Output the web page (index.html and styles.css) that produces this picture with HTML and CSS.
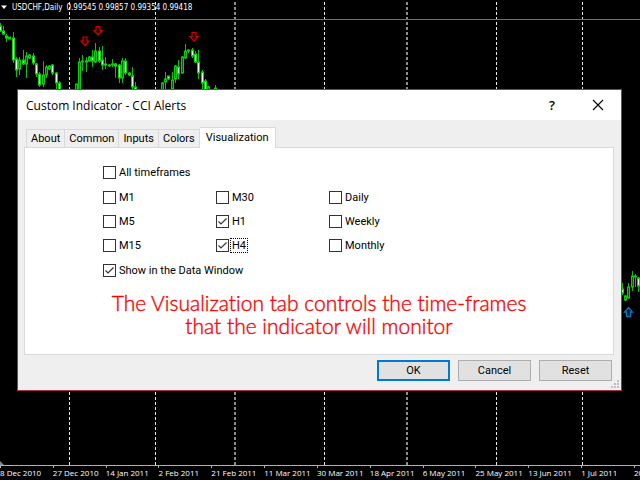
FILE: index.html
```
<!DOCTYPE html>
<html lang="en">
<head>
  <meta charset="UTF-8">
  <meta name="viewport" content="width=device-width, initial-scale=1.0">
  <title>USDCHF,Daily</title>
  <link rel="stylesheet" href="styles.css">
</head>
<body>
  <svg class="plot" aria-hidden="true">
    <g class="separators">
      <path d="M69.5 0V465M155.5 0V465M324.5 0V465M496.5 0V465M582.5 0V465"/>
      <path class="soft" d="M235 0V465M407 0V465"/>
    </g>
    <g id="candles"></g>
    <g class="sell">
      <path d="M83 37h4v4h2l-4 4.500l-4 -4.500h2z"/>
      <path d="M96 26.500h4v4h2l-4 4.500l-4 -4.500h2z"/>
      <path d="M192 32.500h4v4h2l-4 4.500l-4 -4.500h2z"/>
    </g>
    <path class="buy" d="M626.500 316.500h4v-4.500h2l-4 -4.500l-4 4.500h2z"/>
    <path class="marker" d="M0 461l4 4h-4z"/>
  </svg>

  <header class="quote">
    <svg width="8" height="5" aria-hidden="true"><path d="M1 0.500h6l-3 3.500z" fill="#fff"/></svg>
    <span>USDCHF,Daily</span>
    <span>0.99545 0.99857 0.99354 0.99418</span>
  </header>

  <main class="desktop">
    <form class="dialog" role="dialog" aria-labelledby="title">
      <div class="titlebar">
        <h1 id="title">Custom Indicator - CCI Alerts</h1>
        <button type="button" class="caption help" aria-label="Help">?</button>
        <button type="button" class="caption" aria-label="Close">
          <svg width="12" height="12" aria-hidden="true"><path d="M1 1l10 10M11 1l-10 10" stroke="#000" stroke-width="1.100"/></svg>
        </button>
      </div>

      <div class="tabs" role="tablist">
        <button type="button" class="tab" role="tab">About</button>
        <button type="button" class="tab" role="tab">Common</button>
        <button type="button" class="tab" role="tab">Inputs</button>
        <button type="button" class="tab" role="tab">Colors</button>
        <button type="button" class="tab active" role="tab" aria-selected="true">Visualization</button>
      </div>

      <div class="panel" role="tabpanel">
        <div class="options">
          <label class="check"><input type="checkbox"><span>All timeframes</span></label>
          <div class="frames">
            <label class="check"><input type="checkbox"><span>M1</span></label>
            <label class="check"><input type="checkbox"><span>M30</span></label>
            <label class="check"><input type="checkbox"><span>Daily</span></label>
            <label class="check"><input type="checkbox"><span>M5</span></label>
            <label class="check"><input type="checkbox" checked><span>H1</span></label>
            <label class="check"><input type="checkbox"><span>Weekly</span></label>
            <label class="check"><input type="checkbox"><span>M15</span></label>
            <label class="check current"><input type="checkbox" checked><span>H4</span></label>
            <label class="check"><input type="checkbox"><span>Monthly</span></label>
          </div>
          <label class="check"><input type="checkbox" checked><span>Show in the Data Window</span></label>
        </div>
        <p class="note">The Visualization tab controls the time-frames<br>that the indicator will monitor</p>
      </div>

      <div class="actions">
        <button type="submit" class="btn default">OK</button>
        <button type="button" class="btn">Cancel</button>
        <button type="reset" class="btn">Reset</button>
      </div>
      <svg class="grip" width="8" height="8" aria-hidden="true">
        <path d="M6 0h2v2h-2zM3 3h2v2h-2zM6 3h2v2h-2zM0 6h2v2h-2zM3 6h2v2h-2zM6 6h2v2h-2z" fill="#bfbfbf"/>
      </svg>
    </form>
  </main>

  <footer class="axis">
    <span>8 Dec 2010</span>
    <span>27 Dec 2010</span>
    <span>14 Jan 2011</span>
    <span>2 Feb 2011</span>
    <span>21 Feb 2011</span>
    <span>11 Mar 2011</span>
    <span>30 Mar 2011</span>
    <span>18 Apr 2011</span>
    <span>6 May 2011</span>
    <span>25 May 2011</span>
    <span>13 Jun 2011</span>
    <span>1 Jul 2011</span>
    <span>20 Jul 2011</span>
  </footer>

  <script src="chart.js"></script>
</body>
</html>
```
FILE: styles.css
```
* {
  margin: 0;
  padding: 0;
  box-sizing: border-box;
}

body {
  display: flex;
  flex-direction: column;
  min-height: 100vh;
  background: #000;
  color: #000;
  font-family: Roboto, "Liberation Sans", sans-serif;
  font-size: 11px;
}

button {
  font: inherit;
  color: inherit;
  border: 0;
  background: none;
}

/* chart */

.plot {
  position: absolute;
  top: 0;
  left: 0;
  width: 100%;
  height: 100%;
  z-index: -1;
}

.separators path {
  stroke: #e8e8e8;
  stroke-width: 1;
  stroke-dasharray: 3 2;
  stroke-dashoffset: 3;
}

.separators .soft {
  stroke: #8c8c8c;
  stroke-width: 2;
}

.wick {
  stroke: #00c800;
  stroke-width: 1;
}

.bull {
  fill: #006400;
  stroke: #00d200;
}

.bear {
  fill: #d8ffd8;
  stroke: #00e000;
}

.sell path {
  fill: #200000;
  stroke: #d00000;
  stroke-width: 1.2;
}

.buy {
  fill: #001828;
  stroke: #0078c0;
  stroke-width: 1.3;
}

.marker {
  fill: #778899;
}

.quote {
  display: flex;
  align-items: center;
  gap: 4px;
  height: 20px;
  padding: 0 0 4px;
  border-bottom: 1px solid #66727c;
  color: #fff;
  font-family: "DejaVu Sans Condensed", "DejaVu Sans", sans-serif;
  font-size: 8px;
  white-space: nowrap;
}

.desktop {
  flex: 1;
  padding: 69px 18px 0 17px;
}

.axis {
  display: grid;
  grid-template-columns: repeat(12, 1fr) 6px;
  height: 15px;
  border-top: 1px solid #b0b0b0;
  color: #fff;
  font-family: "Open Sans", sans-serif;
  font-size: 8px;
  line-height: 14px;
  white-space: nowrap;
}

.axis span {
  overflow: hidden;
  background: linear-gradient(#b0b0b0, #b0b0b0) 0 0 / 1px 2px no-repeat;
}

/* dialog */

.dialog {
  position: relative;
  border: 1px solid #a8324a;
  background: #efefef;
}

.titlebar {
  display: flex;
  align-items: center;
  height: 30px;
  padding: 0 0 0 8px;
  background: #fff;
}

.titlebar h1 {
  flex: 1;
  font-family: "Open Sans", sans-serif;
  font-size: 12px;
  font-weight: 400;
}

.caption {
  display: flex;
  align-items: center;
  justify-content: center;
  width: 46px;
  height: 30px;
}

.help {
  font-family: "Open Sans", sans-serif;
  font-size: 13px;
  font-weight: 600;
}

.tabs {
  display: flex;
  align-items: flex-end;
  padding: 7px 8px 0;
}

.tab {
  height: 18px;
  padding: 0 4px;
  border: 1px solid #d9d9d9;
  border-width: 1px 1px 0 0;
}

.tab:first-child {
  border-left-width: 1px;
}

.tab.active {
  height: 21px;
  margin-bottom: -1px;
  padding: 0 6px 2px;
  background: #fff;
  z-index: 1;
}

.panel {
  margin: 0 7px 0 6px;
  padding: 12px 0 17px;
  border: 1px solid #d9d9d9;
  background: #fff;
}

.options {
  display: grid;
  gap: 1px;
  padding-left: 78px;
}

.frames {
  display: grid;
  grid-template-columns: repeat(3, 113px);
}

.check {
  display: flex;
  align-items: center;
  gap: 2px;
  height: 24px;
}

.check input {
  appearance: none;
  width: 13px;
  height: 13px;
  border: 1px solid #333;
  background: #fff;
}

.check input:checked {
  background: url("data:image/svg+xml,%3Csvg xmlns='http://www.w3.org/2000/svg' width='11' height='11'%3E%3Cpath d='M1.500 5.500l2.500 2.500l5.500 -5.500' fill='none' stroke='%23333' stroke-width='1.200'/%3E%3C/svg%3E") no-repeat;
}

.check span {
  padding: 0 1px;
}

.current span {
  outline: 1px dotted #000;
}

.note {
  margin-top: 9px;
  color: #f00;
  font-family: Lato, sans-serif;
  font-size: 21px;
  font-weight: 300;
  font-variant-ligatures: none;
  -webkit-text-stroke: 0.4px #f00;
  line-height: 23px;
  text-align: center;
}

.actions {
  display: flex;
  justify-content: flex-end;
  gap: 8px;
  padding: 5px 9px 9px;
}

.btn {
  width: 73px;
  height: 21px;
  border: 1px solid #adadad;
  background: #e1e1e1;
}

.btn.default {
  border: 2px solid #0078d7;
}

.grip {
  position: absolute;
  right: 2px;
  bottom: 2px;
}
```
FILE: chart.js
```
// x, high, low, body top, body bottom, bull (1) / bear (0)
const bars = [
  [0, 23, 32, 26, 31, 0], [3.3, 26, 35, 31, 34, 0], [6.5, 34, 42, 36, 38, 0],
  [9.7, 37, 39, 37, 39, 1], [13, 32, 63, 38, 60, 0], [16.3, 57, 77, 59, 70, 0],
  [19.7, 57, 75, 60, 69, 1], [23, 50, 65, 60, 64, 0], [26.3, 52, 78, 56, 64, 1],
  [29.7, 54, 59, 55, 58, 1], [33, 53, 65, 56, 63, 0], [36.3, 63, 77, 64, 74, 0],
  [39.7, 72, 87, 74, 85, 0], [43, 61, 87, 75, 84, 1], [46, 65, 78, 67, 75, 1],
  [49.3, 65, 70, 66, 69, 1], [52.7, 64, 75, 65, 73, 0], [56, 72, 90, 73, 83, 0],
  [59.3, 81, 90, 83, 90, 0],
  [76, 84, 90, 84, 90, 1], [79.3, 58, 90, 62, 90, 1], [82.7, 55, 71, 61, 62, 1],
  [86, 57, 72, 61, 62, 0], [89.3, 56, 62, 57, 61, 1], [92.3, 50, 67, 57, 61, 0],
  [95.7, 43, 63, 51, 62, 1], [99, 47, 63, 51, 61, 0], [102.3, 46, 70, 60, 65, 0],
  [105.7, 57, 69, 64, 65, 0], [109, 64, 67, 65, 66, 1], [112.3, 59, 67, 64, 65, 1],
  [115.7, 63, 78, 64, 66, 0], [119, 64, 83, 65, 78, 0], [122.3, 58, 83, 61, 78, 1],
  [125.7, 58, 75, 61, 73, 0], [129, 72, 76, 73, 75, 0], [132.3, 67, 90, 76, 87, 0],
  [135.7, 82, 90, 87, 90, 0],
  [162, 82, 90, 83, 90, 1], [165.3, 72, 90, 79, 82, 1], [168.7, 76, 80, 76, 79, 0],
  [172, 72, 90, 80, 89, 1], [175.3, 65, 83, 66, 79, 1], [178.7, 60, 79, 67, 74, 0],
  [182, 56, 74, 57, 73, 1], [185.3, 44, 59, 51, 58, 1], [188.7, 49, 53, 50, 51, 1],
  [192, 48, 58, 50, 56, 0], [195.3, 51, 63, 54, 62, 0], [198.7, 50, 79, 62, 73, 0],
  [202, 70, 90, 72, 83, 0], [205.3, 79, 90, 81, 90, 0], [208.7, 86, 90, 87, 90, 1],
  [215, 85, 90, 88, 90, 1],
  [622.3, 283, 295, 289, 293, 0], [625.3, 295, 301, 296, 300, 1], [628.7, 283, 298, 287, 298, 1],
  [632, 271, 291, 276, 287, 1], [635.3, 274, 287, 276, 277, 1], [638.7, 277, 292, 278, 286, 0]
];

document.getElementById('candles').innerHTML = bars.map(([x, high, low, top, bottom, bull]) => `
  <path class="wick" d="M${Math.floor(x) + 0.5} ${high}V${low}"/>
  <rect class="${bull ? 'bull' : 'bear'}" x="${Math.floor(x) - 0.5}" y="${top}" width="2" height="${bottom - top}" stroke-width="1"/>
`).join('');
```
